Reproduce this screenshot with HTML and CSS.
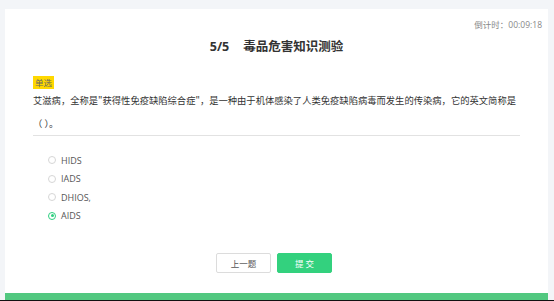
FILE: index.html
```html
<!DOCTYPE html>
<html lang="zh">
<head>
<meta charset="utf-8">
<title>毒品危害知识测验</title>
<link rel="stylesheet" href="styles.css">
</head>
<body>
<div class="card">
  <div class="timer">倒计时：00:09:18</div>
  <h1 class="title"><span class="num">5/5</span><span>毒品危害知识测验</span></h1>
  <div class="question">
    <span class="tag">单选</span>
    <p class="qtext">艾滋病，全称是"获得性免疫缺陷综合症"，是一种由于机体感染了人类免疫缺陷病毒而发生的传染病，它的英文简称是<br>（ ）。</p>
  </div>
  <ul class="options">
    <li class="option"><span class="radio"></span><span>HIDS</span></li>
    <li class="option"><span class="radio"></span><span>IADS</span></li>
    <li class="option"><span class="radio"></span><span>DHIOS,</span></li>
    <li class="option checked"><span class="radio"></span><span>AIDS</span></li>
  </ul>
  <div class="actions">
    <button class="btn btn-prev">上一题</button>
    <button class="btn btn-submit">提 交</button>
  </div>
  <div class="bar"></div>
</div>
<div class="edge"></div>
</body>
</html>
```
FILE: styles.css
```css
* { box-sizing: border-box; }
html, body { margin: 0; padding: 0; }
body {
  background: #f3f5f8;
  font-family: "Open Sans", "Noto Sans CJK SC", sans-serif;
  color: #333;
  height: 301px;
  overflow: hidden;
  display: flex;
  flex-direction: column;
}
.card {
  background: #fff;
  margin: 9px 6px 0 5px;
  display: flex;
  flex-direction: column;
  flex: 1;
}
.timer {
  align-self: flex-end;
  font-size: 8.5px;
  line-height: 12px;
  color: #888;
  padding-top: 10px;
  padding-right: 6px;
}
.title {
  margin: 6px 0 0;
  text-align: center;
  font-size: 12.5px;
  line-height: 20px;
  font-weight: bold;
  color: #333;
}
.title .num { margin-right: 14px; }
.question {
  margin: 19px 28px 0 28px;
  border-bottom: 1px solid #e2e2e2;
}
.tag {
  display: block;
  width: fit-content;
  background: #ffd800;
  color: #666;
  font-size: 8.5px;
  line-height: 13px;
  padding: 0 2px;
}
.qtext {
  margin: 0;
  font-family: "Noto Sans CJK SC", sans-serif;
  font-size: 9.3px;
  line-height: 23px;
  color: #333;
}
.options {
  list-style: none;
  margin: 15px 0 0 43px;
  padding: 0;
}
.option {
  display: flex;
  align-items: center;
  gap: 5px;
  height: 18.5px;
  font-size: 9px;
  color: #555;
}
.radio {
  width: 8px;
  height: 8px;
  border: 1px solid #d6d6d6;
  border-radius: 50%;
  display: flex;
  align-items: center;
  justify-content: center;
}
.option.checked .radio { border-color: #2ecf7f; }
.option.checked .radio::after {
  content: "";
  width: 3px;
  height: 3px;
  border-radius: 50%;
  background: #2ecf7f;
}
.actions {
  display: flex;
  justify-content: center;
  gap: 6px;
  margin-top: 28px;
  padding-right: 5px;
}
.btn {
  width: 55px;
  height: 20px;
  font-family: inherit;
  font-size: 8.5px;
  border-radius: 2px;
  padding: 0;
}
.btn-prev {
  background: #fff;
  border: 1px solid #dcdcdc;
  color: #555;
}
.btn-submit {
  background: #33d17e;
  border: 1px solid #33d17e;
  color: #fff;
}
.bar {
  margin-top: auto;
  height: 7px;
  background: #52c880;
}
.edge {
  height: 1px;
  background: #111;
}
```
